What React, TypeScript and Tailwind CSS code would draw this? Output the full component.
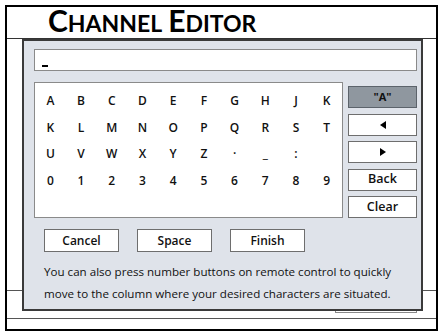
const rows = [
  ["A", "B", "C", "D", "E", "F", "G", "H", "J", "K"],
  ["K", "L", "M", "N", "O", "P", "Q", "R", "S", "T"],
  ["U", "V", "W", "X", "Y", "Z", "·", "_", ":", ""],
  ["0", "1", "2", "3", "4", "5", "6", "7", "8", "9"],
];

function Tri({ dir }: { dir: "left" | "right" }) {
  return (
    <svg width="6" height="8" viewBox="0 0 6 8">
      {dir === "left" ? <path d="M6 0 L0 4 L6 8 Z" fill="#000" /> : <path d="M0 0 L6 4 L0 8 Z" fill="#000" />}
    </svg>
  );
}

function SideButton({ children, active }: { children: React.ReactNode; active?: boolean }) {
  return (
    <div
      className={
        active
          ? "flex h-[22px] items-center justify-center border border-[#5c636b] bg-[#8f979f] text-[11px] font-bold text-[#111]"
          : "flex h-[22px] items-center justify-center border border-[#6e6e6e] bg-white text-[12.5px] font-semibold text-[#111]"
      }
    >
      {children}
    </div>
  );
}

function BottomButton({ label }: { label: string }) {
  return (
    <div className="flex h-[23px] w-[75px] items-center justify-center border border-[#6e6e6e] bg-white text-[12px] font-semibold text-[#111]">
      {label}
    </div>
  );
}

export default function App() {
  return (
    <div className="h-[335px] w-[443px] bg-white p-[5px] font-['Open_Sans',sans-serif]">
      <div className="relative flex h-[326px] flex-col border-2 border-black">
        {/* title bar */}
        <div className="flex h-[32px] items-end border-b border-[#333] pb-[3px] pl-[41px] font-['Lato',sans-serif] font-bold leading-none text-black">
          <span className="text-[30px]">C</span>
          <span className="text-[23px]">HANNEL</span>
          <span className="ml-[6px] text-[30px]">E</span>
          <span className="text-[23px]">DITOR</span>
        </div>

        {/* background page behind the dialog */}
        <div className="h-[252px] border-b border-[#555]" />
        <div className="flex h-[28px] justify-end border-b border-[#555] pr-[19px]">
          <div className="h-[22px] w-[82px] border border-[#888] bg-white" />
        </div>

        {/* dialog */}
        <div className="absolute left-[15px] top-[32px] h-[272px] w-[401px] border-2 border-[#3a3a3a] bg-[#dfe3ea] pl-[10px] pr-[4px] pt-[8px]">
          <div className="flex h-[22px] items-end border border-[#8a8a8a] bg-white pb-[3px] pl-[7px]">
            <div className="h-[2px] w-[6px] bg-black" />
          </div>

          <div className="mt-[11px] flex gap-[5px]">
            <div className="h-[136px] w-[309px] border border-[#8a8a8a] bg-white pt-[5px]">
              {rows.map((row, ri) => (
                <div key={ri} className="grid h-[26.5px] grid-cols-10">
                  {row.map((ch, ci) => (
                    <div key={ci} className="flex items-center justify-center text-[12px] font-semibold text-[#111]">
                      {ch}
                    </div>
                  ))}
                </div>
              ))}
            </div>
            <div className="flex w-[69px] flex-col gap-[5.5px] pt-[4px]">
              <SideButton active>"A"</SideButton>
              <SideButton>
                <Tri dir="left" />
              </SideButton>
              <SideButton>
                <Tri dir="right" />
              </SideButton>
              <SideButton>Back</SideButton>
              <SideButton>Clear</SideButton>
            </div>
          </div>

          <div className="ml-[10px] mt-[11px] flex gap-[18px]">
            <BottomButton label="Cancel" />
            <BottomButton label="Space" />
            <BottomButton label="Finish" />
          </div>

          <p className="ml-[10px] mt-[9px] text-[11.6px] font-medium leading-[22px] text-[#111]">
            You can also press number buttons on remote control to quickly
            <br />
            move to the column where your desired characters are situated.
          </p>
        </div>
      </div>
    </div>
  );
}
